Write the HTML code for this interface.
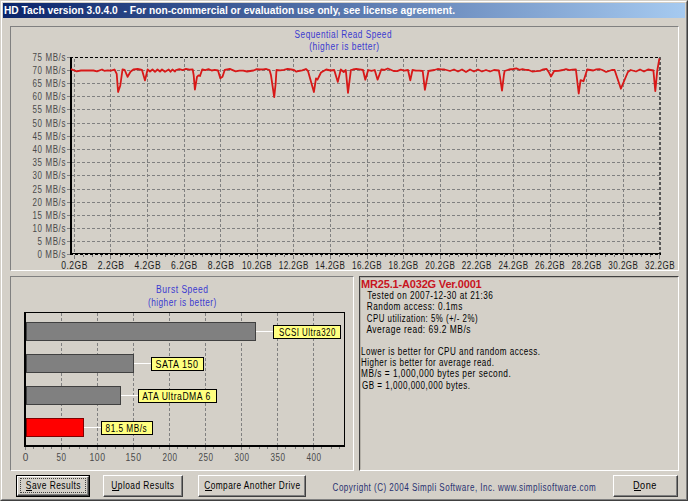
<!DOCTYPE html>
<html><head><meta charset="utf-8"><title>HD Tach</title>
<style>
*{box-sizing:border-box}
html,body{margin:0;padding:0;width:688px;height:501px;overflow:hidden;background:#d4d0c8}
body{position:relative;font-family:"Liberation Sans", sans-serif}
#win{position:absolute;left:0;top:0;width:688px;height:501px;background:#d4d0c8;border-top:1px solid #d4d0c8;border-left:1px solid #d4d0c8;border-right:1px solid #404040;border-bottom:1px solid #404040}
#win2{position:absolute;left:0;top:0;right:0;bottom:0;border-top:1px solid #fff;border-left:1px solid #fff;border-right:1px solid #808080;border-bottom:1px solid #808080}
#title{position:absolute;left:3px;top:3px;width:682px;height:15px;background:linear-gradient(to right,#0a246a,#a6caf0)}
.panel{position:absolute;border-top:1px solid #808080;border-left:1px solid #808080;border-right:1px solid #fff;border-bottom:1px solid #fff}
#info2{position:absolute;left:0;top:0;right:0;bottom:0;border-top:1px solid #b4b0a8;border-left:1px solid #b4b0a8;border-right:1px solid #d4d0c8;border-bottom:1px solid #d4d0c8}
.btn{position:absolute;height:22px;border-top:1px solid #fff;border-left:1px solid #fff;border-right:1px solid #404040;border-bottom:1px solid #404040}
.btn::before{content:"";position:absolute;left:0;top:0;right:0;bottom:0;border-right:1px solid #808080;border-bottom:1px solid #808080}
.def{border:1px solid #000}
.def::before{border-top:1px solid #fff;border-left:1px solid #fff;border-right:1px solid #404040;border-bottom:1px solid #404040}
.def::after{content:"";position:absolute;left:1px;top:1px;right:1px;bottom:1px;border-right:1px solid #808080;border-bottom:1px solid #808080}
.focus{position:absolute;left:20px;top:478px;width:66px;height:15px;border:1px dotted #404040}
svg{position:absolute;left:0;top:0}
text{font-family:"Liberation Sans", sans-serif;white-space:pre}
</style></head><body>
<div id="win"><div id="win2"></div></div>
<div id="title"></div>
<div class="panel" style="left:10px;top:26px;width:669px;height:245px"></div>
<div class="panel" style="left:10px;top:276px;width:344px;height:195px"></div>
<div class="panel" style="left:359px;top:276px;width:320px;height:195px;border-top-color:#404040;border-left-color:#404040"><div id="info2"></div></div>
<div class="btn def" style="left:16px;top:475px;width:74px"></div>
<div class="focus"></div>
<div class="btn" style="left:103px;top:475px;width:80px"></div>
<div class="btn" style="left:198px;top:475px;width:108px"></div>
<div class="btn" style="left:613px;top:475px;width:65px"></div>
<svg width="688" height="501" viewBox="0 0 688 501" shape-rendering="crispEdges">
<line x1="67" y1="57.5" x2="70" y2="57.5" stroke="#808080"/>
<line x1="72" y1="70.5" x2="660" y2="70.5" stroke="#808080" stroke-dasharray="3,2"/>
<line x1="67" y1="70.5" x2="70" y2="70.5" stroke="#808080"/>
<line x1="72" y1="83.5" x2="660" y2="83.5" stroke="#808080" stroke-dasharray="3,2"/>
<line x1="67" y1="83.5" x2="70" y2="83.5" stroke="#808080"/>
<line x1="72" y1="96.5" x2="660" y2="96.5" stroke="#808080" stroke-dasharray="3,2"/>
<line x1="67" y1="96.5" x2="70" y2="96.5" stroke="#808080"/>
<line x1="72" y1="109.5" x2="660" y2="109.5" stroke="#808080" stroke-dasharray="3,2"/>
<line x1="67" y1="109.5" x2="70" y2="109.5" stroke="#808080"/>
<line x1="72" y1="123.5" x2="660" y2="123.5" stroke="#808080" stroke-dasharray="3,2"/>
<line x1="67" y1="123.5" x2="70" y2="123.5" stroke="#808080"/>
<line x1="72" y1="136.5" x2="660" y2="136.5" stroke="#808080" stroke-dasharray="3,2"/>
<line x1="67" y1="136.5" x2="70" y2="136.5" stroke="#808080"/>
<line x1="72" y1="149.5" x2="660" y2="149.5" stroke="#808080" stroke-dasharray="3,2"/>
<line x1="67" y1="149.5" x2="70" y2="149.5" stroke="#808080"/>
<line x1="72" y1="162.5" x2="660" y2="162.5" stroke="#808080" stroke-dasharray="3,2"/>
<line x1="67" y1="162.5" x2="70" y2="162.5" stroke="#808080"/>
<line x1="72" y1="175.5" x2="660" y2="175.5" stroke="#808080" stroke-dasharray="3,2"/>
<line x1="67" y1="175.5" x2="70" y2="175.5" stroke="#808080"/>
<line x1="72" y1="189.5" x2="660" y2="189.5" stroke="#808080" stroke-dasharray="3,2"/>
<line x1="67" y1="189.5" x2="70" y2="189.5" stroke="#808080"/>
<line x1="72" y1="202.5" x2="660" y2="202.5" stroke="#808080" stroke-dasharray="3,2"/>
<line x1="67" y1="202.5" x2="70" y2="202.5" stroke="#808080"/>
<line x1="72" y1="215.5" x2="660" y2="215.5" stroke="#808080" stroke-dasharray="3,2"/>
<line x1="67" y1="215.5" x2="70" y2="215.5" stroke="#808080"/>
<line x1="72" y1="228.5" x2="660" y2="228.5" stroke="#808080" stroke-dasharray="3,2"/>
<line x1="67" y1="228.5" x2="70" y2="228.5" stroke="#808080"/>
<line x1="72" y1="241.5" x2="660" y2="241.5" stroke="#808080" stroke-dasharray="3,2"/>
<line x1="67" y1="241.5" x2="70" y2="241.5" stroke="#808080"/>
<line x1="67" y1="254.5" x2="70" y2="254.5" stroke="#808080"/>
<line x1="74.5" y1="59" x2="74.5" y2="253" stroke="#808080" stroke-dasharray="3,2"/>
<line x1="110.5" y1="59" x2="110.5" y2="253" stroke="#808080" stroke-dasharray="3,2"/>
<line x1="147.5" y1="59" x2="147.5" y2="253" stroke="#808080" stroke-dasharray="3,2"/>
<line x1="184.5" y1="59" x2="184.5" y2="253" stroke="#808080" stroke-dasharray="3,2"/>
<line x1="220.5" y1="59" x2="220.5" y2="253" stroke="#808080" stroke-dasharray="3,2"/>
<line x1="257.5" y1="59" x2="257.5" y2="253" stroke="#808080" stroke-dasharray="3,2"/>
<line x1="293.5" y1="59" x2="293.5" y2="253" stroke="#808080" stroke-dasharray="3,2"/>
<line x1="330.5" y1="59" x2="330.5" y2="253" stroke="#808080" stroke-dasharray="3,2"/>
<line x1="367.5" y1="59" x2="367.5" y2="253" stroke="#808080" stroke-dasharray="3,2"/>
<line x1="403.5" y1="59" x2="403.5" y2="253" stroke="#808080" stroke-dasharray="3,2"/>
<line x1="440.5" y1="59" x2="440.5" y2="253" stroke="#808080" stroke-dasharray="3,2"/>
<line x1="476.5" y1="59" x2="476.5" y2="253" stroke="#808080" stroke-dasharray="3,2"/>
<line x1="513.5" y1="59" x2="513.5" y2="253" stroke="#808080" stroke-dasharray="3,2"/>
<line x1="550.5" y1="59" x2="550.5" y2="253" stroke="#808080" stroke-dasharray="3,2"/>
<line x1="586.5" y1="59" x2="586.5" y2="253" stroke="#808080" stroke-dasharray="3,2"/>
<line x1="623.5" y1="59" x2="623.5" y2="253" stroke="#808080" stroke-dasharray="3,2"/>
<line x1="74.5" y1="255" x2="74.5" y2="259" stroke="#808080"/>
<line x1="83.5" y1="255" x2="83.5" y2="257" stroke="#808080"/>
<line x1="92.5" y1="255" x2="92.5" y2="257" stroke="#808080"/>
<line x1="101.5" y1="255" x2="101.5" y2="257" stroke="#808080"/>
<line x1="110.5" y1="255" x2="110.5" y2="259" stroke="#808080"/>
<line x1="120.5" y1="255" x2="120.5" y2="257" stroke="#808080"/>
<line x1="129.5" y1="255" x2="129.5" y2="257" stroke="#808080"/>
<line x1="138.5" y1="255" x2="138.5" y2="257" stroke="#808080"/>
<line x1="147.5" y1="255" x2="147.5" y2="259" stroke="#808080"/>
<line x1="156.5" y1="255" x2="156.5" y2="257" stroke="#808080"/>
<line x1="165.5" y1="255" x2="165.5" y2="257" stroke="#808080"/>
<line x1="174.5" y1="255" x2="174.5" y2="257" stroke="#808080"/>
<line x1="184.5" y1="255" x2="184.5" y2="259" stroke="#808080"/>
<line x1="193.5" y1="255" x2="193.5" y2="257" stroke="#808080"/>
<line x1="202.5" y1="255" x2="202.5" y2="257" stroke="#808080"/>
<line x1="211.5" y1="255" x2="211.5" y2="257" stroke="#808080"/>
<line x1="220.5" y1="255" x2="220.5" y2="259" stroke="#808080"/>
<line x1="229.5" y1="255" x2="229.5" y2="257" stroke="#808080"/>
<line x1="239.5" y1="255" x2="239.5" y2="257" stroke="#808080"/>
<line x1="248.5" y1="255" x2="248.5" y2="257" stroke="#808080"/>
<line x1="257.5" y1="255" x2="257.5" y2="259" stroke="#808080"/>
<line x1="266.5" y1="255" x2="266.5" y2="257" stroke="#808080"/>
<line x1="275.5" y1="255" x2="275.5" y2="257" stroke="#808080"/>
<line x1="284.5" y1="255" x2="284.5" y2="257" stroke="#808080"/>
<line x1="293.5" y1="255" x2="293.5" y2="259" stroke="#808080"/>
<line x1="303.5" y1="255" x2="303.5" y2="257" stroke="#808080"/>
<line x1="312.5" y1="255" x2="312.5" y2="257" stroke="#808080"/>
<line x1="321.5" y1="255" x2="321.5" y2="257" stroke="#808080"/>
<line x1="330.5" y1="255" x2="330.5" y2="259" stroke="#808080"/>
<line x1="339.5" y1="255" x2="339.5" y2="257" stroke="#808080"/>
<line x1="348.5" y1="255" x2="348.5" y2="257" stroke="#808080"/>
<line x1="357.5" y1="255" x2="357.5" y2="257" stroke="#808080"/>
<line x1="367.5" y1="255" x2="367.5" y2="259" stroke="#808080"/>
<line x1="376.5" y1="255" x2="376.5" y2="257" stroke="#808080"/>
<line x1="385.5" y1="255" x2="385.5" y2="257" stroke="#808080"/>
<line x1="394.5" y1="255" x2="394.5" y2="257" stroke="#808080"/>
<line x1="403.5" y1="255" x2="403.5" y2="259" stroke="#808080"/>
<line x1="412.5" y1="255" x2="412.5" y2="257" stroke="#808080"/>
<line x1="422.5" y1="255" x2="422.5" y2="257" stroke="#808080"/>
<line x1="431.5" y1="255" x2="431.5" y2="257" stroke="#808080"/>
<line x1="440.5" y1="255" x2="440.5" y2="259" stroke="#808080"/>
<line x1="449.5" y1="255" x2="449.5" y2="257" stroke="#808080"/>
<line x1="458.5" y1="255" x2="458.5" y2="257" stroke="#808080"/>
<line x1="467.5" y1="255" x2="467.5" y2="257" stroke="#808080"/>
<line x1="476.5" y1="255" x2="476.5" y2="259" stroke="#808080"/>
<line x1="486.5" y1="255" x2="486.5" y2="257" stroke="#808080"/>
<line x1="495.5" y1="255" x2="495.5" y2="257" stroke="#808080"/>
<line x1="504.5" y1="255" x2="504.5" y2="257" stroke="#808080"/>
<line x1="513.5" y1="255" x2="513.5" y2="259" stroke="#808080"/>
<line x1="522.5" y1="255" x2="522.5" y2="257" stroke="#808080"/>
<line x1="531.5" y1="255" x2="531.5" y2="257" stroke="#808080"/>
<line x1="540.5" y1="255" x2="540.5" y2="257" stroke="#808080"/>
<line x1="550.5" y1="255" x2="550.5" y2="259" stroke="#808080"/>
<line x1="559.5" y1="255" x2="559.5" y2="257" stroke="#808080"/>
<line x1="568.5" y1="255" x2="568.5" y2="257" stroke="#808080"/>
<line x1="577.5" y1="255" x2="577.5" y2="257" stroke="#808080"/>
<line x1="586.5" y1="255" x2="586.5" y2="259" stroke="#808080"/>
<line x1="595.5" y1="255" x2="595.5" y2="257" stroke="#808080"/>
<line x1="605.5" y1="255" x2="605.5" y2="257" stroke="#808080"/>
<line x1="614.5" y1="255" x2="614.5" y2="257" stroke="#808080"/>
<line x1="623.5" y1="255" x2="623.5" y2="259" stroke="#808080"/>
<line x1="632.5" y1="255" x2="632.5" y2="257" stroke="#808080"/>
<line x1="641.5" y1="255" x2="641.5" y2="257" stroke="#808080"/>
<line x1="650.5" y1="255" x2="650.5" y2="257" stroke="#808080"/>
<line x1="659.5" y1="255" x2="659.5" y2="259" stroke="#808080"/>
<line x1="70" y1="57.5" x2="661" y2="57.5" stroke="#000" stroke-dasharray="3,2"/>
<line x1="660" y1="57" x2="660" y2="255" stroke="#585858" stroke-width="2" stroke-dasharray="3,2"/>
<rect x="70" y="57" width="2" height="198" fill="#000"/>
<rect x="70" y="253" width="591" height="1" fill="#000"/>
<line x1="70" y1="254.5" x2="661" y2="254.5" stroke="#000" stroke-dasharray="3,2"/>
<polyline points="70.9,69.1 76.7,71.3 81.0,70.5 85.4,70.5 89.8,70.5 93.4,70.5 97.0,71.3 102.0,69.5 104.3,70.8 107.7,70.4 111.1,70.7 114.5,69.5 116.7,73.9 118.1,92.0 120.3,85.5 122.5,69.5 124.7,70.0 127.6,76.8 130.5,71.7 133.4,69.5 137.7,69.0 142.0,70.0 145.0,80.4 147.6,69.5 150.0,71.5 152.5,69.5 155.0,71.8 157.5,69.5 160.0,71.5 162.0,69.5 165.0,71.8 168.7,69.5 170.5,71.8 172.4,69.5 175.0,71.5 176.0,70.0 179.3,69.1 182.7,70.2 186.0,68.9 189.4,69.6 192.7,69.5 193.7,75.3 194.9,89.6 197.0,76.8 198.5,75.3 200.0,76.0 202.2,69.5 205.4,70.1 208.5,69.1 211.7,70.5 214.8,69.9 218.0,70.5 220.3,78.3 222.5,76.8 224.7,70.0 229.8,68.8 235.6,71.3 239.4,70.6 243.2,70.6 247.0,71.5 250.2,71.0 253.5,70.5 256.8,69.2 260.0,69.5 263.2,69.3 266.3,69.0 269.5,70.0 271.0,75.3 274.2,97.2 275.6,84.0 276.5,70.0 280.2,70.3 283.9,69.8 287.6,68.8 291.3,69.5 294.0,70.0 296.4,71.7 298.6,71.0 302.2,70.4 305.9,69.0 308.0,71.0 313.9,92.0 316.0,78.3 317.5,79.7 321.0,72.5 326.2,69.5 330.6,70.5 334.2,70.0 337.8,81.9 340.8,69.5 343.7,72.0 345.8,70.0 348.0,92.8 350.9,70.0 352.9,69.5 356.3,68.9 359.6,69.4 363.0,70.0 365.3,79.7 368.2,70.0 371.4,70.8 374.7,70.0 377.6,79.7 381.3,69.5 384.6,69.8 387.8,68.5 393.6,71.0 397.2,71.2 400.8,69.7 404.4,70.7 408.0,70.0 410.3,80.4 412.5,70.0 415.9,70.7 419.3,70.7 422.7,71.0 424.9,89.9 428.5,71.0 434.3,70.0 437.7,69.0 441.1,69.3 444.5,69.5 450.0,71.0 454.0,69.5 458.0,71.5 462.0,69.5 466.0,72.0 470.0,69.5 474.0,71.5 478.0,69.5 482.0,71.5 486.0,70.0 490.0,71.5 494.0,70.0 498.8,70.5 500.0,76.8 502.0,90.6 503.9,75.0 504.6,71.0 509.0,69.5 513.3,69.0 516.4,68.4 519.4,69.8 522.5,69.2 525.5,69.8 528.6,70.0 532.2,71.5 536.1,71.2 540.0,70.8 543.3,69.4 546.6,68.9 548.5,71.7 551.0,76.5 554.2,71.0 558.5,70.9 562.7,70.0 566.0,69.1 569.3,70.2 572.6,69.6 575.9,69.5 578.7,93.5 580.6,80.2 583.5,81.2 587.2,69.5 590.2,70.0 593.3,70.5 596.3,69.4 599.4,69.1 602.4,70.0 606.1,72.0 611.8,70.0 614.6,70.0 620.9,88.7 627.9,72.0 630.7,70.0 636.0,71.5 640.0,69.5 644.0,71.5 648.0,69.5 653.4,70.5 655.3,91.2 657.2,71.0 659.4,58.5" fill="none" stroke="#d81818" stroke-width="1.8" stroke-linejoin="round" shape-rendering="auto"/>
<line x1="61.5" y1="313" x2="61.5" y2="445" stroke="#808080" stroke-dasharray="3,2"/>
<line x1="97.5" y1="313" x2="97.5" y2="445" stroke="#808080" stroke-dasharray="3,2"/>
<line x1="133.5" y1="313" x2="133.5" y2="445" stroke="#808080" stroke-dasharray="3,2"/>
<line x1="169.5" y1="313" x2="169.5" y2="445" stroke="#808080" stroke-dasharray="3,2"/>
<line x1="205.5" y1="313" x2="205.5" y2="445" stroke="#808080" stroke-dasharray="3,2"/>
<line x1="241.5" y1="313" x2="241.5" y2="445" stroke="#808080" stroke-dasharray="3,2"/>
<line x1="277.5" y1="313" x2="277.5" y2="445" stroke="#808080" stroke-dasharray="3,2"/>
<line x1="313.5" y1="313" x2="313.5" y2="445" stroke="#808080" stroke-dasharray="3,2"/>
<line x1="25.5" y1="447" x2="25.5" y2="450" stroke="#808080"/>
<line x1="33.5" y1="447" x2="33.5" y2="449" stroke="#808080"/>
<line x1="43.5" y1="447" x2="43.5" y2="449" stroke="#808080"/>
<line x1="51.5" y1="447" x2="51.5" y2="449" stroke="#808080"/>
<line x1="61.5" y1="447" x2="61.5" y2="450" stroke="#808080"/>
<line x1="69.5" y1="447" x2="69.5" y2="449" stroke="#808080"/>
<line x1="79.5" y1="447" x2="79.5" y2="449" stroke="#808080"/>
<line x1="87.5" y1="447" x2="87.5" y2="449" stroke="#808080"/>
<line x1="97.5" y1="447" x2="97.5" y2="450" stroke="#808080"/>
<line x1="105.5" y1="447" x2="105.5" y2="449" stroke="#808080"/>
<line x1="115.5" y1="447" x2="115.5" y2="449" stroke="#808080"/>
<line x1="123.5" y1="447" x2="123.5" y2="449" stroke="#808080"/>
<line x1="133.5" y1="447" x2="133.5" y2="450" stroke="#808080"/>
<line x1="141.5" y1="447" x2="141.5" y2="449" stroke="#808080"/>
<line x1="151.5" y1="447" x2="151.5" y2="449" stroke="#808080"/>
<line x1="159.5" y1="447" x2="159.5" y2="449" stroke="#808080"/>
<line x1="169.5" y1="447" x2="169.5" y2="450" stroke="#808080"/>
<line x1="177.5" y1="447" x2="177.5" y2="449" stroke="#808080"/>
<line x1="187.5" y1="447" x2="187.5" y2="449" stroke="#808080"/>
<line x1="195.5" y1="447" x2="195.5" y2="449" stroke="#808080"/>
<line x1="205.5" y1="447" x2="205.5" y2="450" stroke="#808080"/>
<line x1="213.5" y1="447" x2="213.5" y2="449" stroke="#808080"/>
<line x1="223.5" y1="447" x2="223.5" y2="449" stroke="#808080"/>
<line x1="231.5" y1="447" x2="231.5" y2="449" stroke="#808080"/>
<line x1="241.5" y1="447" x2="241.5" y2="450" stroke="#808080"/>
<line x1="249.5" y1="447" x2="249.5" y2="449" stroke="#808080"/>
<line x1="259.5" y1="447" x2="259.5" y2="449" stroke="#808080"/>
<line x1="267.5" y1="447" x2="267.5" y2="449" stroke="#808080"/>
<line x1="277.5" y1="447" x2="277.5" y2="450" stroke="#808080"/>
<line x1="285.5" y1="447" x2="285.5" y2="449" stroke="#808080"/>
<line x1="295.5" y1="447" x2="295.5" y2="449" stroke="#808080"/>
<line x1="303.5" y1="447" x2="303.5" y2="449" stroke="#808080"/>
<line x1="313.5" y1="447" x2="313.5" y2="450" stroke="#808080"/>
<line x1="321.5" y1="447" x2="321.5" y2="449" stroke="#808080"/>
<line x1="331.5" y1="447" x2="331.5" y2="449" stroke="#808080"/>
<line x1="339.5" y1="447" x2="339.5" y2="449" stroke="#808080"/>
<rect x="24.5" y="312.5" width="320" height="133" fill="none" stroke="#000"/>
<rect x="24" y="312" width="2" height="135" fill="#000"/>
<rect x="24" y="445" width="321" height="2" fill="#000"/>
<rect x="26.5" y="322.5" width="229" height="18" fill="#808080" stroke="#404040"/>
<line x1="256" y1="331.5" x2="273" y2="331.5" stroke="#fff"/>
<rect x="273.5" y="325.5" width="67" height="13" fill="#ffff80" stroke="#000"/>
<rect x="26.5" y="354.5" width="107" height="18" fill="#808080" stroke="#404040"/>
<line x1="134" y1="363.5" x2="151" y2="363.5" stroke="#fff"/>
<rect x="151.5" y="357.5" width="52" height="13" fill="#ffff80" stroke="#000"/>
<rect x="26.5" y="386.5" width="94" height="18" fill="#808080" stroke="#404040"/>
<line x1="121" y1="395.5" x2="138" y2="395.5" stroke="#fff"/>
<rect x="138.5" y="389.5" width="78" height="13" fill="#ffff80" stroke="#000"/>
<rect x="26.5" y="418.5" width="57" height="18" fill="#ff0000" stroke="#800000"/>
<line x1="84" y1="427.5" x2="101" y2="427.5" stroke="#fff"/>
<rect x="101.5" y="421.5" width="51" height="13" fill="#ffff80" stroke="#000"/>
</svg>
<svg width="688" height="501" viewBox="0 0 688 501">
<text x="4.00" y="14" textLength="451.00" lengthAdjust="spacingAndGlyphs" style="font-size:11px;font-weight:bold;letter-spacing:0px" fill="#fff">HD Tach version 3.0.4.0  - For non-commercial or evaluation use only, see license agreement.</text>
<text x="294.60" y="38" textLength="97.40" lengthAdjust="spacingAndGlyphs" style="font-size:10px;font-weight:normal;letter-spacing:0.6px" fill="#3a3ad0">Sequential Read Speed</text>
<text x="309.20" y="50" textLength="70.40" lengthAdjust="spacingAndGlyphs" style="font-size:10px;font-weight:normal;letter-spacing:0.6px" fill="#3a3ad0">(higher is better)</text>
<text x="156.10" y="293" textLength="52.50" lengthAdjust="spacingAndGlyphs" style="font-size:10px;font-weight:normal;letter-spacing:0.6px" fill="#3a3ad0">Burst Speed</text>
<text x="147.90" y="306" textLength="68.90" lengthAdjust="spacingAndGlyphs" style="font-size:10px;font-weight:normal;letter-spacing:0.6px" fill="#3a3ad0">(higher is better)</text>
<text x="32.40" y="61" textLength="33.70" lengthAdjust="spacingAndGlyphs" style="font-size:10px;font-weight:normal;letter-spacing:0.8px" fill="#4a4a4a">75 MB/s</text>
<text x="32.40" y="74" textLength="33.70" lengthAdjust="spacingAndGlyphs" style="font-size:10px;font-weight:normal;letter-spacing:0.8px" fill="#4a4a4a">70 MB/s</text>
<text x="32.40" y="87" textLength="33.70" lengthAdjust="spacingAndGlyphs" style="font-size:10px;font-weight:normal;letter-spacing:0.8px" fill="#4a4a4a">65 MB/s</text>
<text x="32.40" y="100" textLength="33.70" lengthAdjust="spacingAndGlyphs" style="font-size:10px;font-weight:normal;letter-spacing:0.8px" fill="#4a4a4a">60 MB/s</text>
<text x="32.40" y="113" textLength="33.70" lengthAdjust="spacingAndGlyphs" style="font-size:10px;font-weight:normal;letter-spacing:0.8px" fill="#4a4a4a">55 MB/s</text>
<text x="32.40" y="127" textLength="33.70" lengthAdjust="spacingAndGlyphs" style="font-size:10px;font-weight:normal;letter-spacing:0.8px" fill="#4a4a4a">50 MB/s</text>
<text x="32.40" y="140" textLength="33.70" lengthAdjust="spacingAndGlyphs" style="font-size:10px;font-weight:normal;letter-spacing:0.8px" fill="#4a4a4a">45 MB/s</text>
<text x="32.40" y="153" textLength="33.70" lengthAdjust="spacingAndGlyphs" style="font-size:10px;font-weight:normal;letter-spacing:0.8px" fill="#4a4a4a">40 MB/s</text>
<text x="32.40" y="166" textLength="33.70" lengthAdjust="spacingAndGlyphs" style="font-size:10px;font-weight:normal;letter-spacing:0.8px" fill="#4a4a4a">35 MB/s</text>
<text x="32.40" y="179" textLength="33.70" lengthAdjust="spacingAndGlyphs" style="font-size:10px;font-weight:normal;letter-spacing:0.8px" fill="#4a4a4a">30 MB/s</text>
<text x="32.40" y="193" textLength="33.70" lengthAdjust="spacingAndGlyphs" style="font-size:10px;font-weight:normal;letter-spacing:0.8px" fill="#4a4a4a">25 MB/s</text>
<text x="32.40" y="206" textLength="33.70" lengthAdjust="spacingAndGlyphs" style="font-size:10px;font-weight:normal;letter-spacing:0.8px" fill="#4a4a4a">20 MB/s</text>
<text x="32.40" y="219" textLength="33.70" lengthAdjust="spacingAndGlyphs" style="font-size:10px;font-weight:normal;letter-spacing:0.8px" fill="#4a4a4a">15 MB/s</text>
<text x="32.40" y="232" textLength="33.70" lengthAdjust="spacingAndGlyphs" style="font-size:10px;font-weight:normal;letter-spacing:0.8px" fill="#4a4a4a">10 MB/s</text>
<text x="37.40" y="245" textLength="28.70" lengthAdjust="spacingAndGlyphs" style="font-size:10px;font-weight:normal;letter-spacing:0.8px" fill="#4a4a4a">5 MB/s</text>
<text x="37.40" y="258" textLength="28.70" lengthAdjust="spacingAndGlyphs" style="font-size:10px;font-weight:normal;letter-spacing:0.8px" fill="#4a4a4a">0 MB/s</text>
<text x="61.15" y="269" textLength="26.70" lengthAdjust="spacingAndGlyphs" style="font-size:10px;font-weight:normal;letter-spacing:0.6px" fill="#202020">0.2GB</text>
<text x="97.77" y="269" textLength="26.70" lengthAdjust="spacingAndGlyphs" style="font-size:10px;font-weight:normal;letter-spacing:0.6px" fill="#202020">2.2GB</text>
<text x="134.40" y="269" textLength="26.70" lengthAdjust="spacingAndGlyphs" style="font-size:10px;font-weight:normal;letter-spacing:0.6px" fill="#202020">4.2GB</text>
<text x="171.02" y="269" textLength="26.70" lengthAdjust="spacingAndGlyphs" style="font-size:10px;font-weight:normal;letter-spacing:0.6px" fill="#202020">6.2GB</text>
<text x="207.65" y="269" textLength="26.70" lengthAdjust="spacingAndGlyphs" style="font-size:10px;font-weight:normal;letter-spacing:0.6px" fill="#202020">8.2GB</text>
<text x="242.08" y="269" textLength="30.10" lengthAdjust="spacingAndGlyphs" style="font-size:10px;font-weight:normal;letter-spacing:0.6px" fill="#202020">10.2GB</text>
<text x="278.70" y="269" textLength="30.10" lengthAdjust="spacingAndGlyphs" style="font-size:10px;font-weight:normal;letter-spacing:0.6px" fill="#202020">12.2GB</text>
<text x="315.33" y="269" textLength="30.10" lengthAdjust="spacingAndGlyphs" style="font-size:10px;font-weight:normal;letter-spacing:0.6px" fill="#202020">14.2GB</text>
<text x="351.95" y="269" textLength="30.10" lengthAdjust="spacingAndGlyphs" style="font-size:10px;font-weight:normal;letter-spacing:0.6px" fill="#202020">16.2GB</text>
<text x="388.58" y="269" textLength="30.10" lengthAdjust="spacingAndGlyphs" style="font-size:10px;font-weight:normal;letter-spacing:0.6px" fill="#202020">18.2GB</text>
<text x="425.20" y="269" textLength="30.10" lengthAdjust="spacingAndGlyphs" style="font-size:10px;font-weight:normal;letter-spacing:0.6px" fill="#202020">20.2GB</text>
<text x="461.83" y="269" textLength="30.10" lengthAdjust="spacingAndGlyphs" style="font-size:10px;font-weight:normal;letter-spacing:0.6px" fill="#202020">22.2GB</text>
<text x="498.45" y="269" textLength="30.10" lengthAdjust="spacingAndGlyphs" style="font-size:10px;font-weight:normal;letter-spacing:0.6px" fill="#202020">24.2GB</text>
<text x="535.07" y="269" textLength="30.10" lengthAdjust="spacingAndGlyphs" style="font-size:10px;font-weight:normal;letter-spacing:0.6px" fill="#202020">26.2GB</text>
<text x="571.70" y="269" textLength="30.10" lengthAdjust="spacingAndGlyphs" style="font-size:10px;font-weight:normal;letter-spacing:0.6px" fill="#202020">28.2GB</text>
<text x="608.32" y="269" textLength="30.10" lengthAdjust="spacingAndGlyphs" style="font-size:10px;font-weight:normal;letter-spacing:0.6px" fill="#202020">30.2GB</text>
<text x="644.95" y="269" textLength="30.10" lengthAdjust="spacingAndGlyphs" style="font-size:10px;font-weight:normal;letter-spacing:0.6px" fill="#202020">32.2GB</text>
<text x="22.80" y="461" textLength="3.40" lengthAdjust="spacing" style="font-size:10px;font-weight:normal;letter-spacing:0px" fill="#4a4a4a">0</text>
<text x="56.55" y="461" textLength="9.90" lengthAdjust="spacingAndGlyphs" style="font-size:10px;font-weight:normal;letter-spacing:0.6px" fill="#4a4a4a">50</text>
<text x="89.50" y="461" textLength="16.00" lengthAdjust="spacingAndGlyphs" style="font-size:10px;font-weight:normal;letter-spacing:0.6px" fill="#4a4a4a">100</text>
<text x="125.50" y="461" textLength="16.00" lengthAdjust="spacingAndGlyphs" style="font-size:10px;font-weight:normal;letter-spacing:0.6px" fill="#4a4a4a">150</text>
<text x="162.50" y="461" textLength="15.00" lengthAdjust="spacingAndGlyphs" style="font-size:10px;font-weight:normal;letter-spacing:0.6px" fill="#4a4a4a">200</text>
<text x="198.50" y="461" textLength="15.00" lengthAdjust="spacingAndGlyphs" style="font-size:10px;font-weight:normal;letter-spacing:0.6px" fill="#4a4a4a">250</text>
<text x="234.50" y="461" textLength="15.00" lengthAdjust="spacingAndGlyphs" style="font-size:10px;font-weight:normal;letter-spacing:0.6px" fill="#4a4a4a">300</text>
<text x="270.50" y="461" textLength="15.00" lengthAdjust="spacingAndGlyphs" style="font-size:10px;font-weight:normal;letter-spacing:0.6px" fill="#4a4a4a">350</text>
<text x="306.50" y="461" textLength="15.00" lengthAdjust="spacingAndGlyphs" style="font-size:10px;font-weight:normal;letter-spacing:0.6px" fill="#4a4a4a">400</text>
<text x="279.00" y="336" textLength="56.80" lengthAdjust="spacingAndGlyphs" style="font-size:10px;font-weight:normal;letter-spacing:0.6px" fill="#000">SCSI Ultra320</text>
<text x="155.50" y="368" textLength="43.10" lengthAdjust="spacingAndGlyphs" style="font-size:10px;font-weight:normal;letter-spacing:0.6px" fill="#000">SATA 150</text>
<text x="142.20" y="400" textLength="68.60" lengthAdjust="spacingAndGlyphs" style="font-size:10px;font-weight:normal;letter-spacing:0.6px" fill="#000">ATA UltraDMA 6</text>
<text x="105.60" y="432" textLength="41.50" lengthAdjust="spacingAndGlyphs" style="font-size:10px;font-weight:normal;letter-spacing:0.6px" fill="#000">81.5 MB/s</text>
<text x="361.00" y="288" textLength="120.70" lengthAdjust="spacing" style="font-size:11px;font-weight:bold;letter-spacing:0px" fill="#c8141e">MR25.1-A032G Ver.0001</text>
<text x="367.20" y="299" textLength="126.10" lengthAdjust="spacingAndGlyphs" style="font-size:10px;font-weight:normal;letter-spacing:0.6px" fill="#000">Tested on 2007-12-30 at 21:36</text>
<text x="366.80" y="310" textLength="96.00" lengthAdjust="spacingAndGlyphs" style="font-size:10px;font-weight:normal;letter-spacing:0.6px" fill="#000">Random access: 0.1ms</text>
<text x="366.80" y="322" textLength="111.20" lengthAdjust="spacingAndGlyphs" style="font-size:10px;font-weight:normal;letter-spacing:0.6px" fill="#000">CPU utilization: 5% (+/- 2%)</text>
<text x="366.40" y="333" textLength="104.60" lengthAdjust="spacingAndGlyphs" style="font-size:10px;font-weight:normal;letter-spacing:0.6px" fill="#000">Average read: 69.2 MB/s</text>
<text x="361.00" y="355" textLength="179.50" lengthAdjust="spacingAndGlyphs" style="font-size:10px;font-weight:normal;letter-spacing:0.6px" fill="#000">Lower is better for CPU and random access.</text>
<text x="361.00" y="366" textLength="133.40" lengthAdjust="spacingAndGlyphs" style="font-size:10px;font-weight:normal;letter-spacing:0.6px" fill="#000">Higher is better for average read.</text>
<text x="361.00" y="377" textLength="150.30" lengthAdjust="spacingAndGlyphs" style="font-size:10px;font-weight:normal;letter-spacing:0.6px" fill="#000">MB/s = 1,000,000 bytes per second.</text>
<text x="362.00" y="389" textLength="108.40" lengthAdjust="spacingAndGlyphs" style="font-size:10px;font-weight:normal;letter-spacing:0.6px" fill="#000">GB = 1,000,000,000 bytes.</text>
<text x="25.80" y="489" textLength="55.20" lengthAdjust="spacingAndGlyphs" style="font-size:11px;font-weight:normal;letter-spacing:0.6px" fill="#000">Save Results</text>
<text x="111.30" y="489" textLength="63.10" lengthAdjust="spacingAndGlyphs" style="font-size:11px;font-weight:normal;letter-spacing:0.6px" fill="#000">Upload Results</text>
<text x="204.20" y="489" textLength="96.30" lengthAdjust="spacingAndGlyphs" style="font-size:11px;font-weight:normal;letter-spacing:0.6px" fill="#000">Compare Another Drive</text>
<text x="633.00" y="489" textLength="23.90" lengthAdjust="spacingAndGlyphs" style="font-size:11px;font-weight:normal;letter-spacing:0.6px" fill="#000">Done</text>
<text x="332.60" y="491" textLength="263.50" lengthAdjust="spacingAndGlyphs" style="font-size:10px;font-weight:normal;letter-spacing:0.6px" fill="#283070">Copyright (C) 2004 Simpli Software, Inc. www.simplisoftware.com</text>
<g fill="#000" shape-rendering="crispEdges">
<rect x="26" y="490" width="6" height="1"/>
<rect x="112" y="490" width="7" height="1"/>
<rect x="205" y="490" width="7" height="1"/>
<rect x="634" y="490" width="7" height="1"/>
</g>
</svg>
</body></html>
